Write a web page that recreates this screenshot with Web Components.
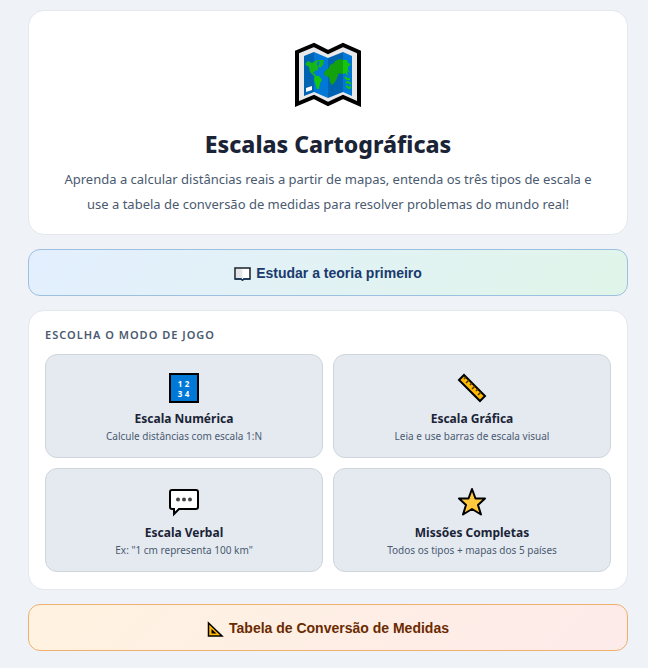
<!DOCTYPE html>
<html lang="pt-BR">
<head>
<meta charset="UTF-8">
<meta name="viewport" content="width=device-width, initial-scale=1.0">
<title>Escalas Cartográficas</title>
<style>
* { box-sizing: border-box; }

body {
    margin: 0;
    padding: 10px 20px 16px 28px;
    background-color: #eff3f8;
    color: #1a2436;
    font-family: "Segoe UI", "Noto Sans", "Open Sans", sans-serif;
}

main {
    display: flex;
    flex-direction: column;
    gap: 14px;
    max-width: 600px;
    margin: 0 auto;
}

svg { display: block; }
</style>
</head>
<body>
<main>
    <hero-card heading="Escalas Cartográficas">
        <svg slot="icon" width="68" height="66" viewBox="0 0 68 66" aria-hidden="true">
            <path d="M3 10 20 3 34 10 49 3 65 10V62L49 55 34 62 20 55 3 62Z" fill="#e9e9ec" stroke="#000" stroke-width="4"/>
            <path d="M10 14 20 10V50L10 54Z" fill="#0063b1"/>
            <path d="M20 10 34 16V56L20 50Z" fill="#0078d7"/>
            <path d="M34 16 49 10V50L34 56Z" fill="#0063b1"/>
            <path d="M49 10 58 14V54L49 50Z" fill="#0078d7"/>
            <path d="M11 22 14 19 18 21 21 19 24 18 30 18 29 23 26 26 24 24 24 28 21 29 19 31 21 32 23 35 20 34 16 30 15 25 12 23Z" fill="#16b51a"/>
            <path d="M23 20 26 19 25 23 23 24Z" fill="#0078d7"/>
            <path d="M21 34 25 34 28 38 26 41 25 47 23 47 21 41 20 37Z" fill="#16c60c"/>
            <path d="M32 28 35 26 36 23 40 21 41 19 46 17 49 18V32L47 32 45 31 43 36 41 40 38 43 36 40 35 35 31 34 30 31Z" fill="#13a10e"/>
            <path d="M49 18 53 18 54 21 57 22 54 25 54 28 57 31 53 29 54 34 51 31 49 32Z" fill="#16c60c"/>
            <path d="M51 35 53 37H56M52 41 54 40 57 42M52 44 55 46 57 45" fill="none" stroke="#16c60c" stroke-width="2"/>
            <path d="M12 46 18 44V48L12 50Z" fill="#fff"/>
        </svg>
        Aprenda a calcular distâncias reais a partir de mapas, entenda os três tipos de escala e use a tabela de conversão de medidas para resolver problemas do mundo real!
    </hero-card>

    <action-button theme="theory">
        <svg slot="icon" width="17" height="14" viewBox="0 0 17 14" aria-hidden="true">
            <path d="M1 1H16V12H10L8.500 13 7 12H1Z" fill="#fff" stroke="#17202b" stroke-width="1.500"/>
            <path d="M2 2H7L8.500 3V11.500L7 11H2Z" fill="#e3e5e8"/>
            <path d="M1 12H7L8.500 13 10 12H16" fill="none" stroke="#17365a" stroke-width="1.500"/>
        </svg>
        Estudar a teoria primeiro
    </action-button>

    <mode-panel heading="Escolha o modo de jogo">
        <mode-card name="Escala Numérica" info="Calcule distâncias com escala 1:N">
            <svg width="30" height="30" viewBox="0 0 30 30" aria-hidden="true">
                <path d="M1 1H29V29H1Z" fill="#0078d7" stroke="#000" stroke-width="2"/>
                <g fill="#fff" font-family="Open Sans, sans-serif" font-size="8" font-weight="700" text-anchor="middle">
                    <text x="11" y="14">1</text>
                    <text x="18" y="14">2</text>
                    <text x="11" y="24">3</text>
                    <text x="18" y="24">4</text>
                </g>
            </svg>
        </mode-card>
        <mode-card name="Escala Gráfica" info="Leia e use barras de escala visual">
            <svg width="30" height="30" viewBox="0 0 30 30" aria-hidden="true">
                <path d="M2 7 7 2 28 23 23 28Z" fill="#ffb900" stroke="#000" stroke-width="2"/>
                <path d="M9 4 7 6M12 7 9 10M15 10 13 12M18 13 15 16M21 16 19 18M24 19 21 22" stroke="#4c3700" stroke-width="1.500"/>
            </svg>
        </mode-card>
        <mode-card name="Escala Verbal" info='Ex: "1 cm representa 100 km"'>
            <svg width="30" height="30" viewBox="0 0 30 30" aria-hidden="true">
                <path d="M3 3H27Q29 3 29 5V20Q29 22 27 22H10L5 27V22H3Q1 22 1 20V5Q1 3 3 3Z" fill="#fff" stroke="#000" stroke-width="2"/>
                <g fill="#444">
                    <circle cx="9" cy="12.500" r="2"/>
                    <circle cx="15" cy="12.500" r="2"/>
                    <circle cx="21" cy="12.500" r="2"/>
                </g>
            </svg>
        </mode-card>
        <mode-card name="Missões Completas" info="Todos os tipos + mapas dos 5 países">
            <svg width="30" height="30" viewBox="0 0 30 30" aria-hidden="true">
                <path d="M15 2 18.500 11.500 28 11.500 21 18 24 27.500 15 22 6 27.500 9 18 2 11.500 11.500 11.500Z" fill="#ffc83d" stroke="#000" stroke-width="2" stroke-linejoin="round"/>
            </svg>
        </mode-card>
    </mode-panel>

    <action-button theme="table">
        <svg slot="icon" width="17" height="16" viewBox="0 0 17 16" aria-hidden="true">
            <path d="M1.500 2V15H15Z" fill="#ffb900" stroke="#000" stroke-width="1.500"/>
            <path d="M4.500 8V12.500H9.500Z" fill="#000"/>
        </svg>
        Tabela de Conversão de Medidas
    </action-button>
</main>

<script>
class HeroCard extends HTMLElement {
    constructor() {
        super();
        this.attachShadow({ mode: 'open' });
    }
    connectedCallback() {
        this.shadowRoot.innerHTML = `
        <style>
            :host {
                display: block;
                padding: 31px 24px 17px;
                background-color: #fff;
                border: 1px solid #e4e7ec;
                border-radius: 16px;
                text-align: center;
            }
            .icon {
                display: flex;
                justify-content: center;
            }
            h1 {
                margin: 18px 0 5px;
                font-size: 23px;
                line-height: 36px;
                font-weight: 800;
            }
            p {
                margin: 0;
                color: #4a5a70;
                font-size: 13px;
                line-height: 25px;
            }
        </style>
        <div class="icon"><slot name="icon"></slot></div>
        <h1>${this.getAttribute('heading')}</h1>
        <p><slot></slot></p>`;
    }
}

class ActionButton extends HTMLElement {
    constructor() {
        super();
        this.attachShadow({ mode: 'open' });
    }
    connectedCallback() {
        this.shadowRoot.innerHTML = `
        <style>
            :host {
                display: block;
                --from: #e3efff;
                --to: #e0f5e9;
                --line: #9dbfe0;
                --ink: #1a3a6e;
            }
            :host([theme="table"]) {
                --from: #fff3e0;
                --to: #fdeaea;
                --line: #f0b070;
                --ink: #6b2a00;
            }
            button {
                display: flex;
                align-items: center;
                justify-content: center;
                gap: 5px;
                width: 100%;
                padding: 15px 14px 13px;
                background: linear-gradient(135deg, var(--from), var(--to));
                border: 1px solid var(--line);
                border-radius: 12px;
                color: var(--ink);
                font: 700 14px/17px "Liberation Sans", Arial, sans-serif;
                cursor: pointer;
            }
        </style>
        <button type="button"><slot name="icon"></slot><span><slot></slot></span></button>`;
    }
}

class ModePanel extends HTMLElement {
    constructor() {
        super();
        this.attachShadow({ mode: 'open' });
    }
    connectedCallback() {
        this.shadowRoot.innerHTML = `
        <style>
            :host {
                display: block;
                padding: 16px 16px 17px;
                background-color: #fff;
                border: 1px solid #e4e7ec;
                border-radius: 16px;
            }
            h2 {
                margin: 0 0 11px;
                color: #4a5a70;
                font-size: 11px;
                line-height: 16px;
                font-weight: 600;
                letter-spacing: 1px;
                text-transform: uppercase;
            }
            .grid {
                display: grid;
                grid-template-columns: 1fr 1fr;
                gap: 10px;
            }
        </style>
        <h2>${this.getAttribute('heading')}</h2>
        <div class="grid"><slot></slot></div>`;
    }
}

class ModeCard extends HTMLElement {
    constructor() {
        super();
        this.attachShadow({ mode: 'open' });
    }
    connectedCallback() {
        this.shadowRoot.innerHTML = `
        <style>
            :host { display: block; }
            button {
                display: flex;
                flex-direction: column;
                align-items: center;
                width: 100%;
                padding: 18px 12px 12px;
                background-color: #e5eaf1;
                border: 1px solid #cfd5dd;
                border-radius: 12px;
                color: inherit;
                font-family: inherit;
                cursor: pointer;
            }
            .name {
                margin-top: 7px;
                font-size: 12px;
                line-height: 18px;
                font-weight: 700;
            }
            .info {
                color: #4a5a70;
                font-size: 10px;
                line-height: 17px;
            }
        </style>
        <button type="button">
            <slot></slot>
            <span class="name">${this.getAttribute('name')}</span>
            <span class="info">${this.getAttribute('info')}</span>
        </button>`;
    }
}

window.customElements.define('hero-card', HeroCard);
window.customElements.define('action-button', ActionButton);
window.customElements.define('mode-panel', ModePanel);
window.customElements.define('mode-card', ModeCard);
</script>
</body>
</html>
